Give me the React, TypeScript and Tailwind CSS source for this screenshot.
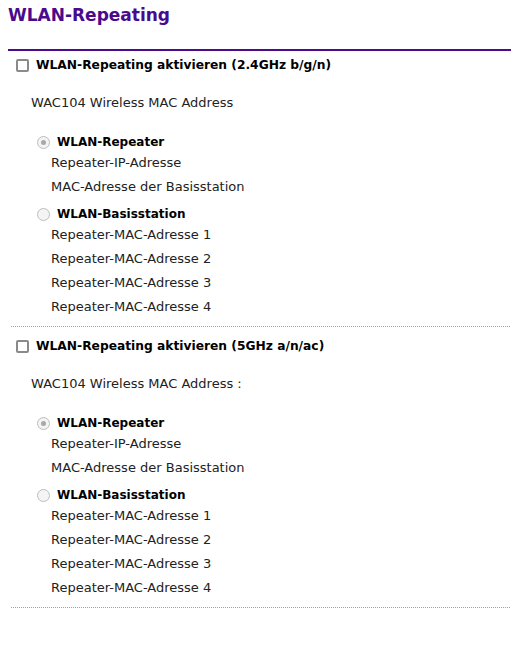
import React from 'react';

const font = { fontFamily: '"DejaVu Sans", Verdana, sans-serif' };

const Checkbox: React.FC = () => (
    <span className="inline-block w-[13px] h-[13px] border-2 border-[#8a8a8a] rounded-[2px] bg-white shrink-0" />
);

const Radio: React.FC<{ checked?: boolean }> = ({ checked }) => (
    <span className="w-[13px] h-[13px] rounded-full border border-[#bdbdbd] bg-[#f4f4f4] flex items-center justify-center shrink-0">
        {checked && <span className="w-[5px] h-[5px] rounded-full bg-[#a8a8a8]" />}
    </span>
);

// radio rows sit 3px lower inside their 24px row
const RadioRow: React.FC<{ label: string; checked?: boolean }> = ({ label, checked }) => (
    <div className="h-[24px] pt-[6px] flex items-center gap-[7px] pl-[26px]">
        <Radio checked={checked} />
        <span className="font-bold text-[12px] text-black">{label}</span>
    </div>
);

const Row: React.FC<{ children: React.ReactNode }> = ({ children }) => (
    <div className="h-[24px] flex items-center pl-[40px] text-[13px] text-[#222]">{children}</div>
);

const Section: React.FC<{ band: string; colon?: boolean; first?: boolean }> = ({ band, colon, first }) => {
    const macRows = [1, 2, 3, 4].map(n => `Repeater-MAC-Adresse ${n}`);
    return (
        <div className="border-b border-dotted border-[#a0a0a0] ml-[11px] mr-[1px] pb-[7px]">
            <label className={`flex items-center gap-[7px] h-[28px] ml-[5px] ${first ? '' : 'mt-[5px]'}`}>
                <Checkbox />
                <span className="font-bold text-[12.25px] text-black">WLAN-Repeating aktivieren ({band})</span>
            </label>
            <div className="h-[48px] flex items-center pl-[20px] text-[13px] text-[#222]">
                WAC104 Wireless MAC Address{colon ? ' :' : ''}
            </div>
            <RadioRow label="WLAN-Repeater" checked />
            <Row>Repeater-IP-Adresse</Row>
            <Row>MAC-Adresse der Basisstation</Row>
            <RadioRow label="WLAN-Basisstation" />
            {macRows.map(r => (
                <Row key={r}>{r}</Row>
            ))}
        </div>
    );
};

export default function App() {
    return (
        <div className="w-[511px] h-[651px] bg-white" style={font}>
            <h1 className="pl-[8px] pt-[3px] h-[49px] text-[17px] font-bold text-[#4a0a8c]">WLAN-Repeating</h1>
            <div className="ml-[8px] h-[2px] bg-[#4b0b8c]" />
            <Section band="2.4GHz b/g/n" first />
            <Section band="5GHz a/n/ac" colon />
        </div>
    );
}
